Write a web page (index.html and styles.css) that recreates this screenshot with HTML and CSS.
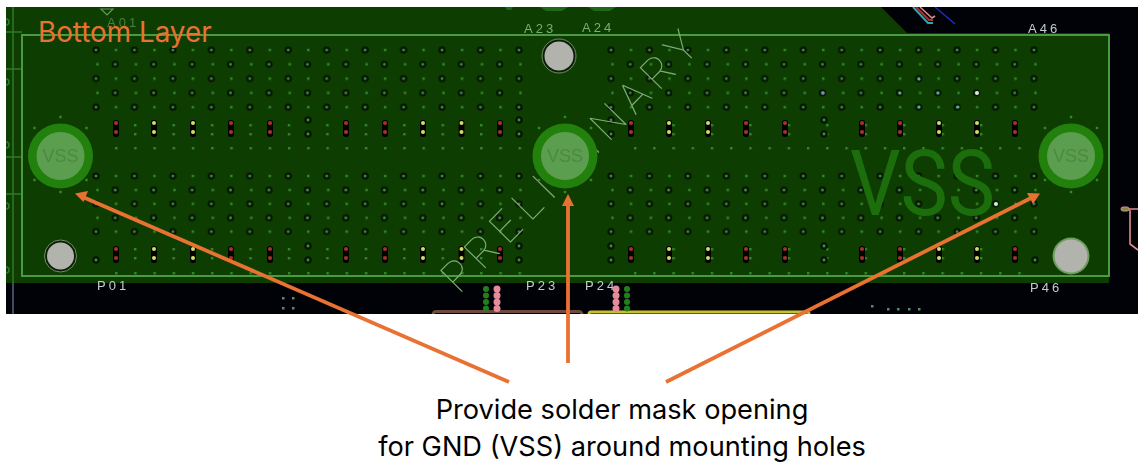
FILE: index.html
```html
<!DOCTYPE html>
<html lang="en">
<head>
<meta charset="utf-8">
<title>Bottom Layer</title>
<link rel="stylesheet" href="styles.css">
</head>
<body>
<main class="slide">
  <svg class="pcb" viewBox="6 7 1132 307" width="1132" height="307" role="img" aria-label="PCB bottom layer">
    <defs>
      <filter id="soft" x="-2%" y="-2%" width="104%" height="104%"><feGaussianBlur stdDeviation="0.5"/></filter>
      <g id="via"><circle r="3.8" class="via-ring"/><circle r="1.4" class="via-core"/></g>
      <rect id="dot" x="-1.2" y="-1.2" width="2.4" height="2.4" class="dot"/>
      <pattern id="vp-tl" patternUnits="userSpaceOnUse" x="91" y="45" width="38.45" height="28.6">
        <use href="#via" x="5" y="5"/><use href="#via" x="24.2" y="19.3"/>
      </pattern>
      <pattern id="vp-bl" patternUnits="userSpaceOnUse" x="91" y="171" width="38.45" height="27.8">
        <use href="#via" x="5" y="5"/><use href="#via" x="24.2" y="19"/>
      </pattern>
      <pattern id="vp-tr" patternUnits="userSpaceOnUse" x="606" y="45" width="38.45" height="28.6">
        <use href="#via" x="5" y="5"/><use href="#via" x="24.2" y="19.3"/>
      </pattern>
      <pattern id="vp-br" patternUnits="userSpaceOnUse" x="606" y="171" width="38.45" height="27.8">
        <use href="#via" x="5" y="5"/><use href="#via" x="24.2" y="19"/>
      </pattern>
      <pattern id="dp-tl" patternUnits="userSpaceOnUse" x="96" y="45" width="38.45" height="28.6">
        <use href="#dot" x="20" y="5"/><use href="#dot" x="1.5" y="19.3"/>
      </pattern>
      <pattern id="dp-bl" patternUnits="userSpaceOnUse" x="96" y="171" width="38.45" height="27.8">
        <use href="#dot" x="20" y="5"/><use href="#dot" x="1.5" y="19"/>
      </pattern>
      <pattern id="dp-tr" patternUnits="userSpaceOnUse" x="611" y="45" width="38.45" height="28.6">
        <use href="#dot" x="20" y="5"/><use href="#dot" x="1.5" y="19.3"/>
      </pattern>
      <pattern id="dp-br" patternUnits="userSpaceOnUse" x="611" y="171" width="38.45" height="27.8">
        <use href="#dot" x="20" y="5"/><use href="#dot" x="1.5" y="19"/>
      </pattern>
      <pattern id="dp-row" patternUnits="userSpaceOnUse" x="115" y="0" width="19.22" height="2">
        <rect x="0" y="0" width="2.4" height="2" class="dot"/>
      </pattern>
      <pattern id="dp-pair" patternUnits="userSpaceOnUse" x="134" y="0" width="38.45" height="2">
        <rect x="0" y="0" width="2.4" height="2" class="dot"/>
      </pattern>
      <g id="pr"><rect x="-3" y="-7.500" width="6" height="17" rx="2.500" class="pair-bg"/><circle cy="-4.5" r="2.1" class="pair-red"/><circle cy="4.5" r="2.1" class="pair-red"/></g>
      <g id="py"><rect x="-3" y="-7.500" width="6" height="17" rx="2.500" class="pair-bg"/><circle cy="-4.5" r="2" class="pair-yel"/><circle cy="4.5" r="2" class="pair-yel"/></g>
      <g id="ring-dots">
        <use href="#dot" x="0" y="-39"/><use href="#dot" x="-26" y="-28"/><use href="#dot" x="26" y="-28"/>
        <use href="#dot" x="-26" y="24"/><use href="#dot" x="26" y="24"/><use href="#dot" x="0" y="36"/>
      </g>
      <g id="pad">
        <circle r="32.5" class="pad-outer"/>
        <circle r="24" class="pad-inner"/>
        <text y="6" class="pad-text">VSS</text>
      </g>
    </defs>

    <rect x="6" y="7" width="1132" height="307" class="bg"/>

    <g filter="url(#soft)">
      <!-- stray traces on the black area -->
      <path d="M913 7 L928 23 H933" class="t-cyan"/>
      <path d="M916 7 L929 20 H933" class="t-red"/>
      <path d="M920 7 L932 18 L935 16" class="t-pink"/>
      <path d="M935 7 L955 24" class="t-blue"/>
      <path d="M1138 209 H1127 M1130 210 V244 L1138 250" class="t-pink"/>
      <rect x="1121" y="207" width="8" height="4" rx="2" class="t-pad"/>
      <rect x="433" y="311.500" width="149" height="8" rx="3" class="t-brown"/>
      <rect x="589" y="312" width="220" height="8" rx="2" class="t-yellow"/>
      <g class="dot-grey">
        <rect x="282" y="297" width="2.500" height="2.500"/><rect x="292" y="297" width="2.500" height="2.500"/>
        <rect x="282" y="307" width="2.500" height="2.500"/><rect x="292" y="307" width="2.500" height="2.500"/>
        <rect x="871" y="305" width="2.500" height="2.500"/><rect x="887" y="308" width="2.500" height="2.500"/>
        <rect x="897" y="308" width="2.500" height="2.500"/><rect x="908" y="308" width="2.500" height="2.500"/>
        <rect x="918" y="308" width="2.500" height="2.500"/>
      </g>

      <!-- board -->
      <path d="M6 7 H881 L907 33 H1109 V283 H6 Z" class="board"/>
      <path d="M505 7 h8 l-2 3 h-4 Z M540 7 h28 l-6 4 h-16 Z M588 7 h28 l-6 4 h-16 Z" class="blob"/>
      <path d="M13 7 V283 M6 32 H22 M6 69 H22 M6 157 H22 M6 194 H22" class="left-lines"/>
      <path d="M13 283 V314" class="left-grey"/>
      <path d="M6 19 a3 3 0 0 1 0 6 M6 79 a3 3 0 0 1 0 6 M6 142 a3 3 0 0 1 0 6 M6 203 a3 3 0 0 1 0 6 M6 267 a3 3 0 0 1 0 6" class="left-lines"/>
      <path d="M101 9 h12 l-6 6 Z" class="marker"/>
      <rect x="22" y="35" width="1087" height="241" class="outline"/>

      <!-- via fields -->
      <rect x="91" y="45" width="433" height="67" fill="url(#dp-tl)"/>
      <rect x="606" y="45" width="434" height="67" fill="url(#dp-tr)"/>
      <rect x="91" y="171" width="433" height="65" fill="url(#dp-bl)"/>
      <rect x="606" y="171" width="434" height="65" fill="url(#dp-br)"/>
      <rect x="91" y="45" width="433" height="67" fill="url(#vp-tl)"/>
      <rect x="606" y="45" width="434" height="67" fill="url(#vp-tr)"/>
      <rect x="91" y="171" width="433" height="65" fill="url(#vp-bl)"/>
      <rect x="606" y="171" width="434" height="65" fill="url(#vp-br)"/>
      <rect x="114" y="147" width="410" height="2.400" fill="url(#dp-row)"/>
      <rect x="632" y="147" width="400" height="2.400" fill="url(#dp-row)"/>
      <rect x="114" y="272" width="410" height="2.400" fill="url(#dp-row)"/>
      <rect x="632" y="272" width="400" height="2.400" fill="url(#dp-row)"/>
      <rect x="134" y="124" width="360" height="2.400" fill="url(#dp-pair)"/>
      <rect x="134" y="133" width="360" height="2.400" fill="url(#dp-pair)"/>
      <rect x="641" y="124" width="360" height="2.400" fill="url(#dp-pair)"/>
      <rect x="641" y="133" width="360" height="2.400" fill="url(#dp-pair)"/>
      <rect x="134" y="248" width="360" height="2.400" fill="url(#dp-pair)"/>
      <rect x="134" y="257" width="360" height="2.400" fill="url(#dp-pair)"/>
      <rect x="641" y="248" width="360" height="2.400" fill="url(#dp-pair)"/>
      <rect x="641" y="257" width="360" height="2.400" fill="url(#dp-pair)"/>

      <use href="#pr" x="116" y="127.500"/><use href="#py" x="154" y="127.500"/><use href="#py" x="193" y="127.500"/>
      <use href="#pr" x="231" y="127.500"/><use href="#pr" x="270" y="127.500"/><use href="#via" x="308" y="120"/>
      <use href="#via" x="308" y="134"/><use href="#pr" x="346" y="127.500"/><use href="#pr" x="385" y="127.500"/>
      <use href="#py" x="423" y="127.500"/><use href="#py" x="461.500" y="127.500"/><use href="#pr" x="500" y="127.500"/>
      <use href="#via" x="519" y="120"/><use href="#via" x="519" y="134"/>
      <use href="#via" x="611" y="120"/><use href="#via" x="611" y="134"/>
      <use href="#pr" x="631" y="127.500"/><use href="#py" x="669" y="127.500"/><use href="#py" x="708" y="127.500"/>
      <use href="#pr" x="746" y="127.500"/><use href="#pr" x="785" y="127.500"/><use href="#via" x="824" y="120"/>
      <use href="#via" x="824" y="134"/><use href="#pr" x="862" y="127.500"/><use href="#pr" x="900" y="127.500"/>
      <use href="#py" x="939" y="127.500"/><use href="#py" x="977" y="127.500"/><use href="#pr" x="1015" y="127.500"/>

      <use href="#via" x="96" y="260"/>
      <use href="#pr" x="116" y="253.500"/><use href="#py" x="154" y="253.500"/><use href="#py" x="193" y="253.500"/>
      <use href="#pr" x="231" y="253.500"/><use href="#pr" x="270" y="253.500"/><use href="#via" x="308" y="246"/>
      <use href="#via" x="308" y="260"/><use href="#pr" x="346" y="253.500"/><use href="#pr" x="385" y="253.500"/>
      <use href="#py" x="423" y="253.500"/><use href="#py" x="461.500" y="253.500"/><use href="#pr" x="500" y="253.500"/>
      <use href="#via" x="519" y="246"/><use href="#via" x="519" y="260"/>
      <use href="#via" x="611" y="246"/><use href="#via" x="611" y="260"/>
      <use href="#pr" x="631" y="253.500"/><use href="#py" x="669" y="253.500"/><use href="#py" x="708" y="253.500"/>
      <use href="#pr" x="746" y="253.500"/><use href="#pr" x="785" y="253.500"/><use href="#via" x="824" y="246"/>
      <use href="#via" x="824" y="260"/><use href="#pr" x="862" y="253.500"/><use href="#pr" x="900" y="253.500"/>
      <use href="#py" x="939" y="253.500"/><use href="#py" x="977" y="253.500"/><use href="#pr" x="1015" y="253.500"/>
      <use href="#via" x="1035" y="260"/>

      <!-- pale vias near the right -->
      <circle cx="823" cy="93" r="1.800" class="via-blue"/>
      <circle cx="900" cy="93" r="1.500" class="via-teal"/>
      <circle cx="938" cy="93" r="1.500" class="via-teal"/>
      <circle cx="919" cy="79" r="1.500" class="via-teal"/>
      <circle cx="919" cy="107" r="1.500" class="via-teal"/>
      <circle cx="958" cy="107" r="1.500" class="via-teal"/>
      <circle cx="977" cy="93" r="2" class="via-white"/>
      <circle cx="996" cy="204" r="2" class="via-white"/>

      <!-- silkscreen -->
      <text x="850" y="215" textLength="145" lengthAdjust="spacingAndGlyphs" class="vss-big">VSS</text>
      <text x="0" y="0" textLength="345" transform="translate(459 295) rotate(-45.500)" class="prelim">PRELIMINARY</text>

      <use href="#ring-dots" x="60.500" y="156"/><use href="#ring-dots" x="565" y="156"/><use href="#ring-dots" x="1071" y="156"/>
      <use href="#pad" x="60.500" y="156"/><use href="#pad" x="565" y="156"/><use href="#pad" x="1071" y="156"/>

      <circle cx="559" cy="56" r="17" class="hole-ring"/><circle cx="559" cy="56" r="14.500" class="hole"/>
      <circle cx="60.500" cy="256" r="16" class="hole-ring"/><circle cx="60.500" cy="256" r="13.500" class="hole"/>
      <circle cx="1071" cy="256" r="18.500" class="hole-halo"/><circle cx="1071" cy="256" r="16.500" class="hole"/>

      <text x="107" y="27" class="lbl lbl-dim">A01</text>
      <text x="524" y="33" class="lbl lbl-green">A23</text>
      <text x="582" y="32" class="lbl lbl-green">A24</text>
      <text x="1028" y="33" class="lbl lbl-white">A46</text>
      <text x="97" y="290" class="lbl lbl-white">P01</text>
      <text x="526" y="290" class="lbl lbl-white">P23</text>
      <text x="585" y="290" class="lbl lbl-white">P24</text>
      <text x="1030" y="292" class="lbl lbl-white">P46</text>

      <path d="M486 289 V314" class="col-green"/>
      <path d="M497 289 V314" class="col-pink"/>
      <path d="M616 289 V314" class="col-pink"/>
      <path d="M627 289 V314" class="col-green"/>
    </g>
  </svg>

  <div class="layer-label">Bottom Layer</div>

  <svg class="arrows" viewBox="0 0 1138 463" width="1138" height="463" aria-hidden="true">
    <line x1="509" y1="382" x2="84" y2="197.500" class="arrow"/>
    <path d="M75 193.500 L88 191 L83.500 202 Z" class="arrow-head"/>
    <line x1="568" y1="363" x2="568" y2="204" class="arrow"/>
    <path d="M568 194 L574 206 L562 206 Z" class="arrow-head"/>
    <line x1="666" y1="382" x2="1031" y2="198" class="arrow"/>
    <path d="M1040 193.500 L1033 204 L1027 193 Z" class="arrow-head"/>
  </svg>

  <p class="caption">Provide solder mask opening<br>for GND (VSS) around mounting holes</p>
</main>
</body>
</html>
```

FILE: styles.css
```css
html, body { margin: 0; padding: 0; background: #fff; }
.slide { position: relative; width: 1138px; height: 463px; overflow: hidden; padding-top: 7px; box-sizing: border-box; }
.pcb { display: block; margin-left: 6px; }
.bg { fill: #000207; }
.board { fill: #0f3e03; }
.outline { fill: none; stroke: #489a40; stroke-width: 2; }
.blob { fill: #1c6a12; }
.left-lines { fill: none; stroke: #2f7a2a; stroke-width: 1.5; }
.left-grey { fill: none; stroke: #6b7da0; stroke-width: 1.2; }
.marker { fill: none; stroke: #5f9a5a; stroke-width: 1.2; }
.via-ring { fill: #041a06; }
.via-core { fill: #4e8450; }
.dot { fill: #2f8a26; }
.dot-grey { fill: #5c8a62; }
.pair-bg { fill: #030503; }
.pair-red { fill: #a83028; }
.pair-yel { fill: #d6da6c; }
.via-blue { fill: #7d8fb5; }
.via-teal { fill: #5fa8a0; }
.via-white { fill: #e0e6e0; }
.pad-outer { fill: #24800a; }
.pad-inner { fill: #5c9e4f; }
.pad-text { font-family: "Liberation Sans", sans-serif; font-size: 18px; fill: #4c8a42; text-anchor: middle; }
.hole-ring { fill: #0a1f08; stroke: #6f8f60; stroke-width: 1; }
.hole { fill: #b2b3ad; }
.hole-halo { fill: #6f9c5d; }
.vss-big { font-family: "Roboto", "Liberation Sans", sans-serif; font-weight: 400; font-size: 90px; fill: #1b6e0b; }
.prelim { font-family: "Roboto", "Liberation Sans", sans-serif; font-weight: 100; font-size: 43px; fill: #7fae7a; }
.lbl { font-family: "Liberation Sans", sans-serif; font-size: 13px; letter-spacing: 3px; }
.lbl-dim { fill: #467f40; }
.lbl-green { fill: #79ad78; }
.lbl-white { fill: #c3cbcc; }
.t-cyan { fill: none; stroke: #2fa7b8; stroke-width: 2; }
.t-red { fill: none; stroke: #a8302c; stroke-width: 2; }
.t-pink { fill: none; stroke: #dc8c92; stroke-width: 1.6; }
.t-blue { fill: none; stroke: #1d2fc0; stroke-width: 1.4; }
.t-pad { fill: #7d8f3c; stroke: #dc8c92; stroke-width: 1; }
.t-brown { fill: #000; stroke: #6e4a40; stroke-width: 3; }
.t-yellow { fill: #000; stroke: #c8c22c; stroke-width: 3; }
.col-green { fill: none; stroke: #23801f; stroke-width: 6; stroke-linecap: round; stroke-dasharray: 0 6.5; }
.col-pink { fill: none; stroke: #e68a9c; stroke-width: 7; stroke-linecap: round; stroke-dasharray: 0 6.5; }
.layer-label { position: absolute; left: 38px; top: 15px; font-family: "Inter", "Liberation Sans", sans-serif; font-size: 27.8px; line-height: 34px; color: #e97132; }
.arrows { position: absolute; left: 0; top: 0; pointer-events: none; }
.arrow { stroke: #e97132; stroke-width: 3.8; }
.arrow-head { fill: #e97132; }
.caption { margin: 77px 0 0; padding-left: 106px; text-align: center; font-family: "Inter", "Liberation Sans", sans-serif; font-size: 27.2px; line-height: 37px; color: #000; }
```
